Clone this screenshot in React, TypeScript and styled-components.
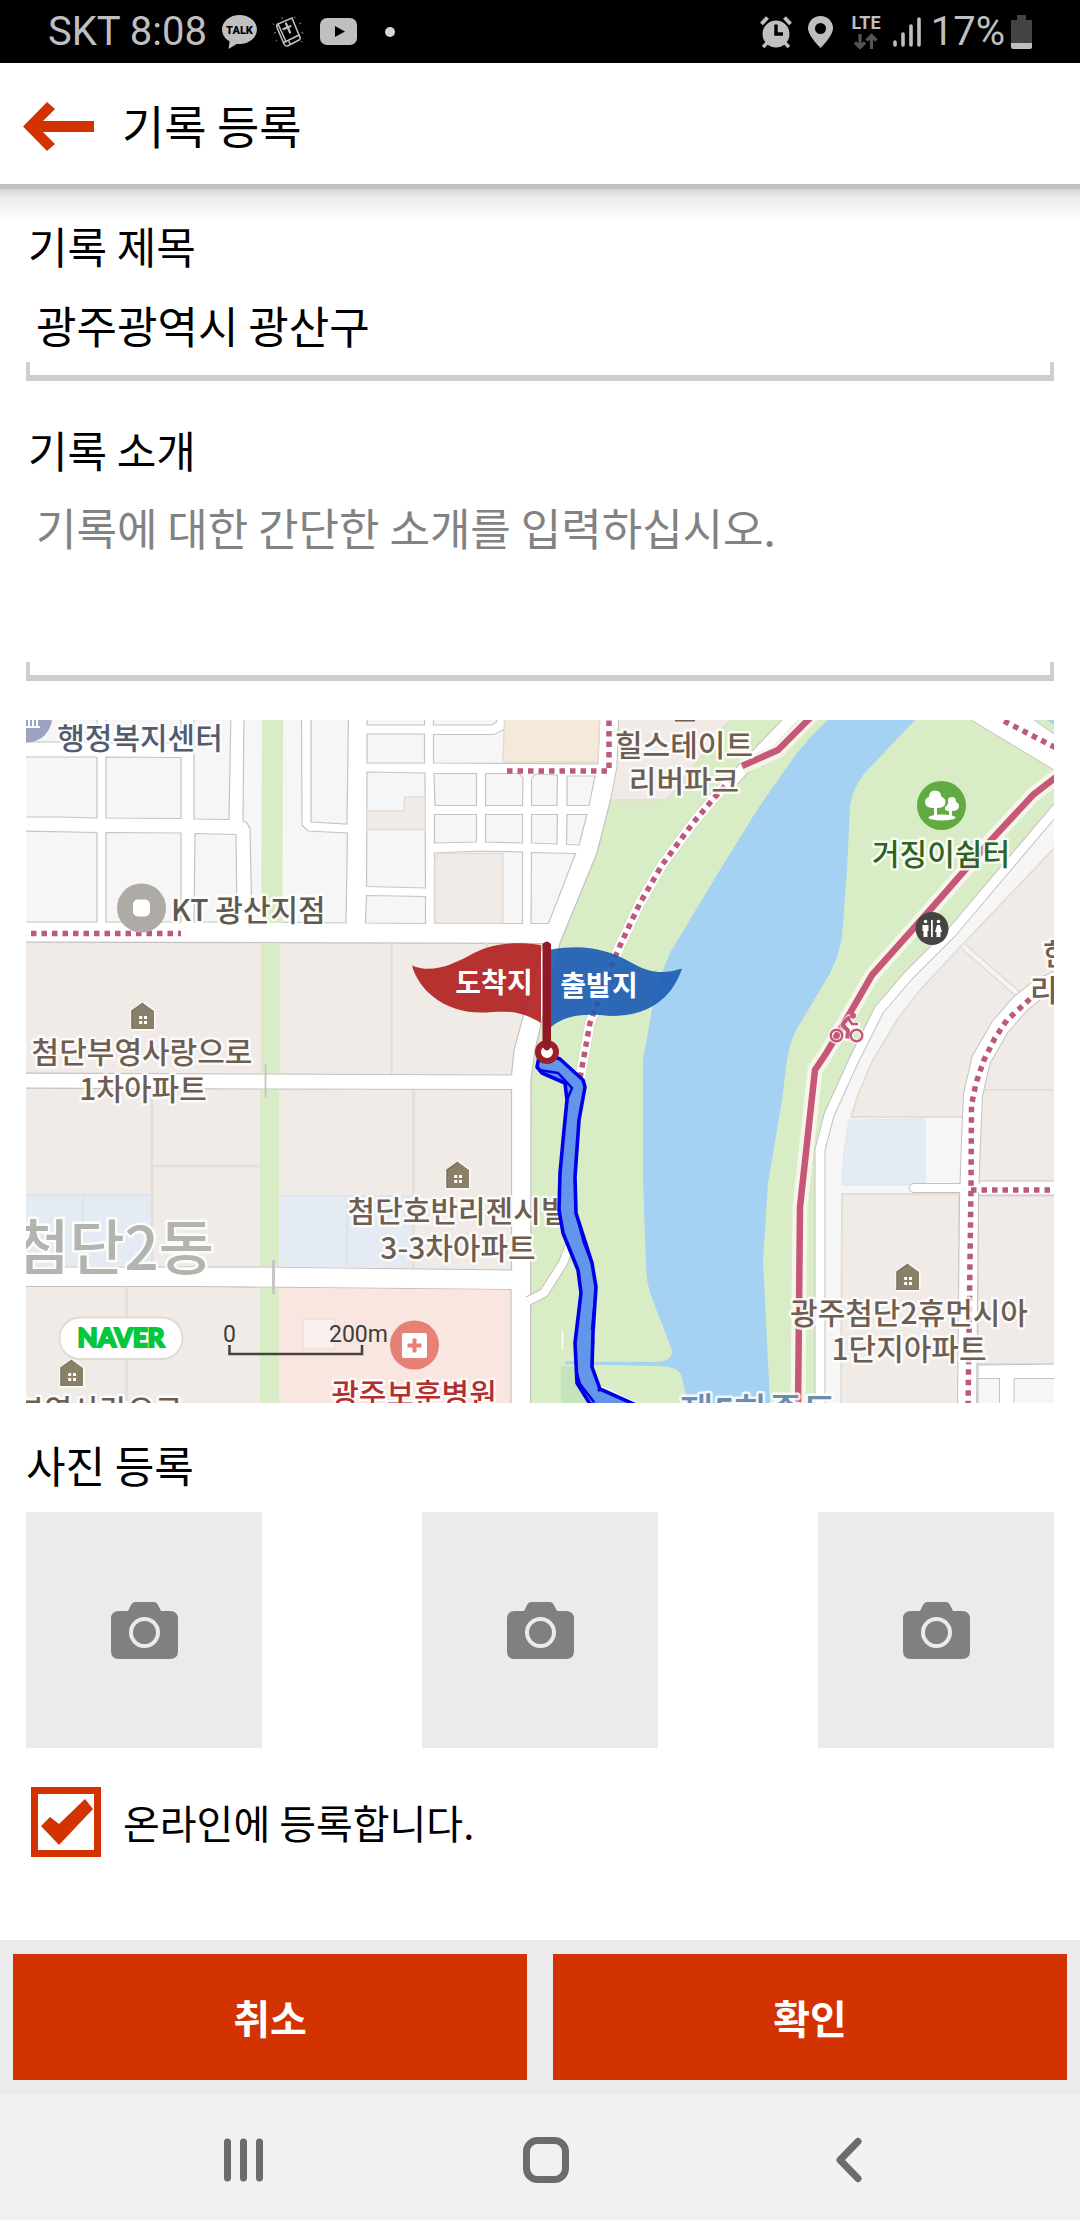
import React, { useState } from "react";
import styled, { createGlobalStyle } from "styled-components";

const GlobalStyle = createGlobalStyle`
  *, *::before, *::after { box-sizing: border-box; }
  body {
    margin: 0;
    background: #fff;
    color: #000;
    font-family: "Noto Sans CJK KR", "Noto Sans", sans-serif;
  }
  svg { display: block; flex: none; }
  button, input, textarea { font: inherit; color: inherit; }
`;

const brand = "#d23300";
const statusGray = "#bfbfbf";
const mapFont = '"Noto Sans CJK KR", "Noto Sans", sans-serif';

const Page = styled.div`
  display: flex;
  flex-direction: column;
  min-height: 100vh;
`;

const StatusBar = styled.div`
  display: flex;
  align-items: center;
  justify-content: space-between;
  height: 63px;
  padding: 0 48px;
  background: #000;
  color: ${statusGray};
  font-family: Roboto, sans-serif;
  font-size: 40px;
  line-height: 64px;
`;

const StatusGroup = styled.div<{ $gap: number }>`
  display: flex;
  align-items: center;
  gap: ${(p) => p.$gap}px;
`;

const Header = styled.header`
  display: flex;
  align-items: center;
  gap: 28px;
  height: 126px;
  padding: 0 23px;
  border-bottom: 5px solid #c1c1c1;
  background: #fff;
`;

const HeaderTitle = styled.h1`
  margin: 0;
  font-size: 46px;
  font-weight: 400;
  line-height: 64px;
`;

const IconButton = styled.button`
  display: flex;
  align-items: center;
  justify-content: center;
  padding: 0;
  border: 0;
  background: none;
  cursor: pointer;
`;

const Form = styled.main`
  flex: 1;
  display: flex;
  flex-direction: column;
  padding: 24px 26px 40px;
  background: linear-gradient(#d6d6d6, #ececec 9px, #fff 33px);
`;

const Field = styled.div`
  display: flex;
  flex-direction: column;
  & + & {
    margin-top: 36px;
  }
`;

const Caption = styled.label`
  padding: 0 2px;
  font-size: 43px;
  line-height: 64px;
`;

const SectionTitle = styled.h2`
  margin: 0 0 16px;
  font-size: 43px;
  font-weight: 400;
  line-height: 64px;
`;

const trayEdges = `
  linear-gradient(#cdcdcd, #cdcdcd) bottom / 100% 6px no-repeat,
  linear-gradient(#cfcfcf, #cfcfcf) left bottom / 4px 19px no-repeat,
  linear-gradient(#cfcfcf, #cfcfcf) right bottom / 4px 19px no-repeat
`;

const TextInput = styled.input`
  width: 100%;
  height: 104px;
  padding: 16px 10px 24px;
  border: 0;
  border-radius: 0;
  outline: 0;
  background: ${trayEdges};
  font-size: 44px;
  line-height: 64px;
`;

const TextArea = styled.textarea`
  display: block;
  width: 100%;
  height: 200px;
  padding: 14px 10px 24px;
  border: 0;
  border-radius: 0;
  outline: 0;
  resize: none;
  background: ${trayEdges};
  font-size: 44px;
  line-height: 64px;
  &::placeholder {
    color: #828282;
    opacity: 1;
  }
`;

const MapFrame = styled.div`
  margin: 39px 0 29px;
  overflow: hidden;
  svg {
    width: 100%;
    height: auto;
  }
`;

const Photos = styled.section`
  display: flex;
  flex-direction: column;
`;

const PhotoRow = styled.div`
  display: flex;
  justify-content: space-between;
`;

const PhotoSlot = styled(IconButton)`
  width: 236px;
  height: 236px;
  background: #ebebeb;
`;

const CheckLabel = styled.label`
  display: flex;
  align-items: center;
  gap: 22px;
  margin-top: 39px;
  padding: 0 5px;
  font-size: 40px;
  line-height: 64px;
`;

const CheckBox = styled.span`
  display: grid;
  width: 70px;
  height: 70px;
  > * {
    grid-area: 1 / 1;
  }
  svg {
    pointer-events: none;
  }
`;

const CheckInput = styled.input`
  appearance: none;
  width: 70px;
  height: 70px;
  margin: 0;
  border: 7px solid ${brand};
  background: #fff;
`;

const ActionBar = styled.footer`
  display: grid;
  grid-template-columns: 1fr 1fr;
  gap: 26px;
  padding: 14px 13px;
  background: #ebebeb;
`;

const ActionButton = styled.button`
  height: 126px;
  padding: 0;
  border: 0;
  background: ${brand};
  color: #fff;
  font-size: 40px;
  font-weight: 700;
  line-height: 64px;
`;

const NavBar = styled.nav`
  display: flex;
  justify-content: space-between;
  height: 126px;
  padding: 6px 217px 0 223px;
  background: #f1f1f1;
`;

const BackArrow = () => (
  <svg width="71" height="55" viewBox="0 -6 71 55" fill={brand}>
    <path d="M0 24.5 24 0l8 7-12 12h51v11H20l12 12-8 7z" />
  </svg>
);

const TalkIcon = () => (
  <svg width="35" height="34" viewBox="0 0 35 34">
    <ellipse cx="17.5" cy="14.5" rx="17.5" ry="14.5" fill={statusGray} />
    <path d="M8 24 6.500 34 18 27z" fill={statusGray} />
    <text x="17.5" y="19" textAnchor="middle" fontFamily="Roboto, sans-serif" fontSize="11" fontWeight="900" fill="#000">
      TALK
    </text>
  </svg>
);

const BibleIcon = () => (
  <svg width="33" height="32" viewBox="0 0 33 32" fill="none" stroke={statusGray} strokeWidth="1.6" strokeLinecap="round">
    <path d="M6 8 20 2l7 17-13 6.5z" />
    <path d="M6 8c-1.500 1-1.500 2-1 3.500L12 28c1 2 2 2.500 4 1.700l11.500-6c1-.7 1-2-.5-4.700M14 25.500c-2 .5-2.500 1.500-2 2.500M17 25.500l1.500 3 2-.9" />
    <path d="m14 7.500 4 9M11.500 13l7-2.800" strokeWidth="2.2" />
    <path d="M1 8l1 .4M2 17l1.500-.5M4 25l1-.8M23 1l-.4 1M29 7l-1.500.7M31 17l-1.500-.2M30 26l-1-.8M10 1.500l.4 1.200" strokeWidth="0.7" />
  </svg>
);

const VideoIcon = () => (
  <svg width="37" height="27" viewBox="0 0 37 27">
    <rect width="37" height="27" rx="7" fill={statusGray} />
    <path d="M15 8v11l10-5.500z" fill="#000" />
  </svg>
);

const DotIcon = () => (
  <svg width="24" height="10" viewBox="0 0 24 10">
    <circle cx="18" cy="5" r="5" fill="#d6d6d6" />
  </svg>
);

const AlarmIcon = () => (
  <svg width="32" height="32" viewBox="0 0 32 32">
    <circle cx="16" cy="18" r="13.5" fill={statusGray} />
    <path d="m1.500 8 6-6.500M30.500 8l-6-6.500" stroke={statusGray} strokeWidth="4" />
    <path d="M7 27l-4 4M25 27l4 4" stroke={statusGray} strokeWidth="3.5" />
    <path d="M16 8.500V18h7" stroke="#000" strokeWidth="3.5" fill="none" />
  </svg>
);

const PinIcon = () => (
  <svg width="25" height="32" viewBox="0 0 25 32">
    <path d="M12.500 0C5.500 0 0 5.500 0 12.300 0 20 12.500 32 12.500 32S25 20 25 12.300C25 5.500 19.500 0 12.500 0z" fill={statusGray} />
    <circle cx="12.5" cy="12.5" r="5.5" fill="#000" />
  </svg>
);

const LteIcon = () => (
  <svg width="34" height="36" viewBox="0 -2 34 36">
    <text x="17" y="13" textAnchor="middle" fontFamily="Roboto, sans-serif" fontSize="18" fontWeight="700" fill={statusGray}>
      LTE
    </text>
    <path d="M11 18v13M6 26.500l5 5 5-5M22.500 33V20M17.500 24.500l5-5 5 5" stroke="#555" strokeWidth="3.2" fill="none" />
  </svg>
);

const SignalIcon = () => (
  <svg width="28" height="32" viewBox="0 0 28 32" stroke={statusGray} strokeWidth="3.6" strokeLinecap="round">
    <path d="M2 26v3M10 18v11M18 10v19M26 3v26" />
  </svg>
);

const BatteryIcon = () => (
  <svg width="21" height="34" viewBox="0 0 21 34">
    <path d="M6 0h9v5h6v23H0V5h6z" fill="#444" />
    <path d="M0 28h21v4q0 2-2 2H2q-2 0-2-2z" fill={statusGray} />
  </svg>
);

const CameraIcon = () => (
  <svg width="67" height="57" viewBox="0 0 67 57">
    <path
      d="M8 9h9l3-6q1.500-3 4-3h19q2.500 0 4 3l3 6h9q8 0 8 8v32q0 8-8 8H8q-8 0-8-8V17q0-8 8-8z"
      fill="#808080"
    />
    <circle cx="33.5" cy="30.5" r="13.5" fill="none" stroke="#ebebeb" strokeWidth="4" />
  </svg>
);

const CheckMark = () => (
  <svg width="70" height="70" viewBox="0 0 70 70">
    <path d="m10 39 9-9 9 7 26-25 8 10-34 36z" fill={brand} />
  </svg>
);

const RecentsIcon = () => (
  <svg width="42" height="44" viewBox="0 0 42 44" stroke="#6c6c6c" strokeWidth="7" strokeLinecap="round">
    <path d="M4.500 4v36M20.500 4v36M36.500 4v36" />
  </svg>
);

const HomeIcon = () => (
  <svg width="46" height="46" viewBox="0 0 46 46">
    <rect x="3.5" y="3.5" width="39" height="39" rx="11" fill="none" stroke="#6c6c6c" strokeWidth="7" />
  </svg>
);

const BackIcon = () => (
  <svg width="37" height="46" viewBox="-9 0 37 46">
    <path d="M23 4.500 5 23l18 18.500" fill="none" stroke="#6c6c6c" strokeWidth="7" strokeLinecap="round" strokeLinejoin="round" />
  </svg>
);

/* ---- Course map ---- */

type Point = [number, number];
const pts = (list: Point[]) => list.map((p) => p.join(",")).join(" ");
const line = (list: Point[]) => "M" + list.map((p) => p.join(" ")).join("L");

const cityBlocks: Point[][] = [
  [[16, 710], [97, 710], [97, 742], [16, 742]],
  [[106, 710], [181, 710], [181, 743], [106, 743]],
  [[16, 757], [97, 757], [97, 818], [60, 817], [16, 817]],
  [[106, 757], [181, 757.5], [181, 818.5], [106, 818]],
  [[194, 710], [231, 710], [229, 819.5], [194, 819]],
  [[16, 831], [97, 832.5], [97, 922], [16, 922]],
  [[106, 832.5], [181, 833], [181, 922], [106, 922]],
  [[195, 833.5], [236, 834.5], [237, 922], [194, 922]],
  [[244, 710], [243, 821], [247, 823], [250, 829], [252, 922], [346, 923], [347.5, 833], [308, 831], [302, 825], [301.5, 710]],
  [[311, 710], [348.5, 710], [347, 824], [311, 822]],
  [[367, 710], [424.5, 710], [424.5, 725], [367, 725]],
  [[367, 734], [424.5, 734], [424.5, 763], [367, 763]],
  [[367, 772], [425, 773], [425.5, 888], [366.5, 886.5]],
  [[366.5, 895.5], [425.5, 896.5], [425.5, 923.5], [365.5, 923]],
  [[433.5, 710], [496.5, 710], [496.5, 722], [492, 725], [433.5, 725]],
  [[433.5, 734.5], [494, 734.5], [505, 729], [505, 710], [600, 710], [598, 764], [433.5, 763]],
  [[434, 773.5], [476.5, 773.5], [476.5, 805.5], [435, 805.5]],
  [[485.5, 773.5], [519, 773.5], [523, 778], [522.5, 805.5], [485.5, 805.5]],
  [[531.5, 779], [535, 774], [557.5, 775], [557, 805.5], [531.5, 805.5]],
  [[567, 776], [595, 776], [589, 805.5], [567, 805.5]],
  [[434.5, 814.5], [476.5, 814.5], [476.5, 842], [434.5, 843]],
  [[485.5, 814.5], [522.5, 814.5], [522.5, 843], [485.5, 842]],
  [[531.5, 814.5], [557.5, 814.5], [557, 844], [531.5, 843]],
  [[567, 814.5], [587, 814.5], [579, 845], [566.5, 844.5]],
  [[434.5, 853], [480, 851], [522.5, 852], [522.5, 923.5], [434.5, 923.5]],
  [[531.5, 852.5], [575.5, 853.5], [548.5, 923.5], [531, 923.5]],
];

const estates: Point[][] = [
  [[16, 942], [543, 943.5], [514, 1050], [511.5, 1075], [260, 1074], [16, 1073]],
  [[16, 1088], [260, 1089], [511.5, 1089.5], [511.5, 1270], [260, 1267], [16, 1267]],
  [[16, 1286.5], [200, 1286.5], [511, 1289.5], [511, 1410], [16, 1410]],
];

const bikePath: Point[] = [
  [1060, 774], [1033, 795], [993, 838], [930, 910], [872, 975], [846, 1020], [827, 1052], [815, 1070], [800, 1207], [798, 1410],
];
const riverRoad: Point[] = [
  [1062, 802], [952, 932], [908, 976], [879, 1010], [853, 1062], [829, 1115], [820, 1150], [820, 1410],
];
const estateRoad: Point[] = [
  [1070, 975], [1040, 988], [1020, 1004], [1000, 1027], [981, 1060], [973, 1095], [971, 1140], [969, 1200], [967, 1410],
];
const estateDots: Point[] = [
  [1030, 999], [1007, 1020], [995, 1038], [984, 1060], [976, 1083], [971.5, 1105], [971, 1187], [968, 1410],
];
const promenade: Point[] = [
  [732, 778], [715, 797], [693, 823], [662, 865], [640, 903], [618, 950], [602, 990], [590, 1023], [580, 1078],
];
const route: Point[] = [
  [540, 1052], [560, 1059], [583, 1080], [585, 1087], [579, 1120], [575, 1177], [576, 1213], [592, 1263], [596, 1287], [593, 1333], [592, 1367], [600, 1389], [645, 1409],
  [590, 1404], [577, 1383], [575, 1343], [581, 1293], [578, 1270], [563, 1233], [559, 1210], [560, 1173], [564, 1130], [567, 1100], [565, 1083], [542, 1073], [537, 1067],
];

const MapText = styled.text<{ $size?: number }>`
  font-family: ${mapFont};
  font-size: ${(p) => p.$size || 30}px;
  font-weight: 500;
  paint-order: stroke;
  stroke: rgba(255, 255, 255, 0.85);
  stroke-width: 5px;
  stroke-linejoin: round;
`;

const FlagText = styled.text`
  font-family: ${mapFont};
  font-size: 28px;
  font-weight: 700;
  fill: #fff;
  text-anchor: middle;
`;

const ScaleText = styled.text`
  font-family: Roboto, sans-serif;
  font-size: 23px;
  fill: #3c3c3c;
`;

const LogoText = styled.text`
  font-family: Lato, sans-serif;
  font-size: 26px;
  font-weight: 900;
  fill: #03c73c;
  stroke: #03c73c;
  stroke-width: 2px;
  text-anchor: middle;
`;

const House = ({ x, y }: { x: number; y: number }) => (
  <g transform={`translate(${x} ${y})`}>
    <path d="M0 0 11 8v18h-22V8z" fill="#8a8068" stroke="#fff" strokeOpacity="0.8" strokeWidth="3" paintOrder="stroke" />
    <path d="M0 0-11 8v18" fill="none" stroke="#7a705c" strokeWidth="1.5" />
    <path d="M-3.800 13h3v3h-3zM1 13h3v3H1zM-3.800 18h3v3h-3zM1 18h3v3H1z" fill="#fff" />
  </g>
);

const Road = ({ points, width, cap }: { points: Point[]; width: number; cap?: "round" }) => (
  <g fill="none" strokeLinejoin="round" strokeLinecap={cap}>
    <path d={line(points)} stroke="#c4c2c0" strokeWidth={width + 2} />
    <path d={line(points)} stroke="#fff" strokeWidth={width} />
  </g>
);

const Dots = ({ points }: { points: Point[] }) => (
  <path d={line(points)} fill="none" stroke="#bd597a" strokeWidth="5.5" strokeDasharray="5.5 5" />
);

const brown = "#6f5d50";

const CourseMap = () => (
  <svg viewBox="26 720 1028 683" role="img" aria-label="기록 경로 지도">
    <rect x="26" y="720" width="1028" height="683" fill="#fff" />

    <g fill="#f6f6f6" stroke="#c4c4c4" strokeWidth="1.2">
      {cityBlocks.map((b, i) => (
        <polygon key={i} points={pts(b)} />
      ))}
    </g>
    <g fill="#f0ebe7" stroke="#e3ddd8" strokeWidth="1.5">
      <polygon points="367,811 404.5,811 404.5,797 425,797 425,829.5 367,829.5" />
      <polygon points="435,858 439,853.5 503,853.5 503,923 435,923" />
    </g>
    <polygon points="504,732 505,710 600,710 598,762 503,762" fill="#f5e9dc" stroke="#e5dacf" strokeWidth="1.5" />

    <g fill="#f0ebe7" stroke="#c4c2c0" strokeWidth="1.2">
      {estates.map((b, i) => (
        <polygon key={i} points={pts(b)} />
      ))}
    </g>
    <g fill="#e4ebf3">
      <rect x="26" y="1195" width="125" height="71" />
      <polygon points="280,1196 414,1196 414,1268 280,1267" />
    </g>
    <polygon points="280,1288 510,1290 510,1403 280,1403" fill="#fae6e1" />
    <rect x="303" y="1319" width="32" height="30" fill="#faf1ee" stroke="#eedfdb" strokeWidth="1.5" />
    <g stroke="#e3deda" strokeWidth="2.5" fill="none">
      <path d="M391.500 943V1074M487 943V960M152 1089V1266M153 1166H259M413.500 1090V1268M126.500 1287V1403" />
      <path d="M26 1195H151M83 1196V1266M281 1196H413M347 1197V1268" stroke="#dde4ec" />
    </g>
    <g fill="#d8ecc5">
      <polygon points="262,720 283,720 282.5,923 261,923" />
      <rect x="261" y="943" width="19" height="130" />
      <rect x="260" y="1090" width="19" height="176" />
      <rect x="260" y="1288" width="19" height="115" />
    </g>
    <path d="M265.500 1064V1097" stroke="#c8c6c4" strokeWidth="1.8" />
    <path d="M273.500 1260V1294" stroke="#c8c6c4" strokeWidth="3" />

    <polygon
      points="619,710 617,767 611,798 597,853 560,943 535,1050 531,1080 530.5,1410 1070,1410 1070,710"
      fill="#d8ecc5"
      stroke="#c4c2c0"
      strokeWidth="1.2"
    />
    <polygon points="619.5,710 735,710 728,722 667,799 611,800 617.5,767" fill="#f0ebe7" />
    <path d="M612 800H667L728 722" fill="none" stroke="#e3ddd0" strokeWidth="1.5" />
    <polygon points="561,1366 690,1372 690,1410 561,1410" fill="#c6e4bb" />
    <path d="M592 1366L672 1364Q692 1376 686 1405H606z" fill="#d8ecc5" />

    <path
      d="M828 720Q806 740 792 760L757 810L720 870L670 953Q658 980 652 1010L643 1060V1180L646 1263Q646 1280 650 1293L672 1350Q673 1362 655 1362L565 1361.500V1364L658 1366Q680 1366 682 1378L688 1403H770L763 1260L768 1183L782 1100L787 1060Q790 1040 798 1027L830 973Q839 955 842 937L847 870L850 807Q852 790 863 775L915 720z"
      fill="#a5d1f2"
    />

    <Road points={[[733, 780], [746, 766], [802, 708]]} width={11} />
    <path d={line([[742, 767], [778, 751], [816, 712]])} fill="none" stroke="#f6f3e6" strokeWidth="14" />
    <path d={line([[742, 766], [778, 750], [816, 712]])} fill="none" stroke="#c65776" strokeWidth="6.5" />

    <path d={line(promenade)} fill="none" stroke="#cfe0c2" strokeWidth="11" />
    <path d={line(promenade)} fill="none" stroke="#fff" strokeWidth="9.5" />
    <Dots points={promenade} />
    <Road points={[[528, 1301], [544, 1293], [563, 1263], [572, 1240]]} width={8} />
    <path d="M562.500 1331V1350" stroke="#fff" strokeWidth="1.5" />

    <polygon points={pts([...riverRoad, [1070, 1410]])} fill="#f6f6f6" />
    <g fill="#f0ebe7" stroke="#e2ddd7" strokeWidth="1.8">
      <polygon points="1062,840 962,945 920,990 897,1020 872,1062 858,1095 851,1117 960,1117 1062,1117" />
      <polygon points="842,1194 959,1194 959,1410 841,1410" />
      <rect x="978" y="1090" width="90" height="92" />
      <rect x="978" y="1196" width="90" height="168" />
    </g>
    <rect x="975" y="1100" width="85" height="40" fill="#f0ebe7" />
    <polygon points="849,1120 925,1119 925,1185 842,1185 844,1152" fill="#e4ebf3" stroke="#dde6ee" />
    <path d="M963 946 1019 995" stroke="#e2ddd7" strokeWidth="7" />
    <path d="M963 946 1019 995" stroke="#f6f5f3" strokeWidth="4" />
    <polygon points="978,1365 1060,1364 1060,1410 978,1410" fill="#fff" stroke="#c4c2c0" />
    <g fill="#f6f6f6" stroke="#c4c4c4">
      <rect x="978" y="1378.5" width="21.5" height="30" />
      <rect x="1014" y="1378.5" width="50" height="30" />
    </g>
    <Road points={[[914, 1188], [965, 1188]]} width={8} cap="round" />
    <Road points={[[975, 1188], [1060, 1188]]} width={13} />
    <Road points={estateRoad} width={18} />
    <path d="M955 1188H1060" stroke="#fff" strokeWidth="8" />
    <Dots points={estateDots} />
    <Dots points={[[971, 1190], [1054, 1190]]} />
    <Road points={riverRoad} width={9} />

    <polygon points="958,712 1064,776 1064,741 1020,710" fill="#fff" stroke="#c4c2c0" />
    <Dots points={[[1004, 721], [1060, 750]]} />
    <path d="M1047 720h8v5z" fill="#a5d1f2" />
    <path d={line(bikePath)} fill="none" stroke="#f6f5e9" strokeWidth="15" />
    <path d={line(bikePath)} fill="none" stroke="#c65776" strokeWidth="6.5" />

    <Dots points={[[31, 933.5], [181, 933.5]]} />
    <Dots points={[[507, 771], [609, 771], [609, 720]]} />

    {/* 지명 */}
    <circle cx="27" cy="717.5" r="25" fill="#9aa3c0" />
    <path d="M26 727h14M29 718v8M33 718v8M37 718v8" stroke="#fff" strokeWidth="2" />
    <MapText x="140" y="749" textAnchor="middle" fill="#525c70">행정복지센터</MapText>

    <circle cx="141.5" cy="908" r="24.5" fill="#aeaaa5" />
    <rect x="133" y="899.5" width="17" height="17" rx="5" fill="#fff" />
    <MapText x="171" y="921" fill="#5f5a50">KT 광산지점</MapText>

    <House x={143} y={1003} />
    <MapText x="142" y="1063" textAnchor="middle" fill={brown}>첨단부영사랑으로</MapText>
    <MapText x="143" y="1100" textAnchor="middle" fill={brown}>1차아파트</MapText>

    <path d="M675 720.500h20" stroke={brown} strokeWidth="2" />
    <MapText x="684" y="756" textAnchor="middle" fill={brown}>힐스테이트</MapText>
    <MapText x="684" y="792" textAnchor="middle" fill={brown}>리버파크</MapText>

    <House x={458} y={1162} />
    <MapText x="458" y="1222" textAnchor="middle" fill={brown}>첨단호반리젠시빌</MapText>
    <MapText x="458" y="1259" textAnchor="middle" fill={brown}>3-3차아파트</MapText>

    <MapText x="214" y="1270" textAnchor="end" fill="#b4b4af" $size={60}>첨단2동</MapText>

    <House x={72} y={1360} />
    <MapText x="72" y="1421" textAnchor="middle" fill={brown}>첨단부영사랑으로</MapText>

    <House x={908} y={1264} />
    <MapText x="909" y="1324" textAnchor="middle" fill={brown}>광주첨단2휴먼시아</MapText>
    <MapText x="909" y="1360" textAnchor="middle" fill={brown}>1단지아파트</MapText>

    <MapText x="758" y="1425" textAnchor="middle" fill="#6c8cab" $size={37}>제5하중도</MapText>
    <MapText x="1043" y="965" fill={brown}>한</MapText>
    <MapText x="1030" y="1001" fill={brown}>리버</MapText>

    <circle cx="941.5" cy="805.5" r="24.5" fill="#62aa42" />
    <g fill="#fff">
      <ellipse cx="942" cy="817.5" rx="13.5" ry="3" />
      <path d="M934 817v-9q-9 0-9-6 0-4 4-5 0-6.500 6-6.500t6.500 6.500q4 1 4 5 0 6-8.500 6v9z" />
      <path d="M949 817v-6q-5 0-4-4 4-2 3-8 1-2 4-2 4 0 4 5 3 1 3 4 0 5-7 5v6z" />
    </g>
    <MapText x="941" y="865" textAnchor="middle" fill="#2f6420">거징이쉼터</MapText>

    <circle cx="932" cy="928.5" r="16.5" fill="#444" />
    <g fill="#fff">
      <circle cx="925.5" cy="921.5" r="1.8" />
      <path d="M922.500 925h6v6h-1v6h-4v-6h-1z" />
      <rect x="931" y="920" width="1.8" height="17" />
      <circle cx="938.5" cy="921.5" r="1.8" />
      <path d="M937 925h3l2 7h-1.500v5h-4v-5H935z" />
    </g>

    <g fill="none" stroke="#fff" strokeOpacity="0.8" strokeLinejoin="round" strokeLinecap="round">
      <circle cx="836.5" cy="1035.5" r="6" strokeWidth="5" />
      <circle cx="856.5" cy="1035.5" r="6" strokeWidth="5" />
      <path d="M849 1018l-6 7 5 5-1 8M848 1021l4 4h5" strokeWidth="7" />
    </g>
    <g fill="none" stroke="#c65776" strokeLinejoin="round">
      <circle cx="836.5" cy="1035.5" r="5.8" strokeWidth="2.4" />
      <circle cx="856.5" cy="1035.5" r="5.8" strokeWidth="2.4" />
      <path d="M850 1017.500q-4 1-7.500 7.500l5.500 5.500-.8 8" strokeWidth="4" />
      <path d="M844 1023l4-5 4 6h6" strokeWidth="2.6" />
      <circle cx="853" cy="1015.7" r="2.6" fill="#c65776" />
    </g>

    <circle cx="414.5" cy="1345" r="24.5" fill="#e88175" />
    <rect x="402" y="1333" width="25" height="25" rx="2" fill="#fff" />
    <path d="M414.500 1338.500v14M407.500 1345.500h14" stroke="#e88175" strokeWidth="4" />
    <MapText x="414" y="1405" textAnchor="middle" fill="#b1302f">광주보훈병원</MapText>

    {/* 이동 경로 */}
    <path d="M598 1387 640 1407" stroke="#fff" strokeWidth="5" />
    <polygon points={pts(route)} fill="#6495ed" stroke="#0000e6" strokeWidth="3.6" strokeLinejoin="round" />
    <path
      d="M539 1070 558 1073 572 1088 567 1100M576 1213 584 1243 592 1263M596 1287 592 1330M593 1340 592 1367M576 1370 580 1384 594 1402M600 1389 598 1391"
      fill="none"
      stroke="#0000e6"
      strokeWidth="2.5"
    />
    <circle cx="547" cy="1052" r="9" fill="#fff" stroke="#9f1d2a" strokeWidth="6" />
    <path
      d="M412 965.500C432 974 452 965 474 953 496 942 518 942 541 945V1023C516 1008 502 1012 482 1012.500 442 1013 418 988 412 965.500z"
      fill="#ad1616"
      fillOpacity="0.87"
    />
    <path
      d="M551 949.500C582 944 606 948 632 963 652 974 664 974 682 968.500 674 992 656 1016 610 1016 588 1014 568 1013 551 1027z"
      fill="#1a5ab2"
      fillOpacity="0.9"
    />
    <path d="M542.500 944q4.500-5 8.500 0V1047q-4 7-8.500 0z" fill="#901927" />
    <FlagText x="494" y="993">도착지</FlagText>
    <FlagText x="599" y="996">출발지</FlagText>

    {/* 축척 */}
    <rect x="59.5" y="1317.5" width="123" height="41.5" rx="20.5" fill="#fff" stroke="#dedad6" strokeWidth="1.8" />
    <LogoText x="121" y="1347">NAVER</LogoText>
    <ScaleText x="223" y="1342">0</ScaleText>
    <ScaleText x="329" y="1342">200m</ScaleText>
    <path d="M229.500 1345v9h132.500v-9" fill="none" stroke="#444" strokeWidth="2.6" />
  </svg>
);

const photoSlots = ["사진 1 추가", "사진 2 추가", "사진 3 추가"];

export default function App() {
  const [title, setTitle] = useState("광주광역시 광산구");
  const [intro, setIntro] = useState("");
  const [online, setOnline] = useState(true);

  return (
    <Page>
      <GlobalStyle />
      <StatusBar>
        <StatusGroup $gap={15}>
          <span>SKT 8:08</span>
          <TalkIcon />
          <BibleIcon />
          <VideoIcon />
          <DotIcon />
        </StatusGroup>
        <StatusGroup $gap={16}>
          <AlarmIcon />
          <PinIcon />
          <StatusGroup $gap={10}>
            <LteIcon />
            <SignalIcon />
            <StatusGroup $gap={6}>
              <span>17%</span>
              <BatteryIcon />
            </StatusGroup>
          </StatusGroup>
        </StatusGroup>
      </StatusBar>

      <Header>
        <IconButton type="button" aria-label="뒤로">
          <BackArrow />
        </IconButton>
        <HeaderTitle>기록 등록</HeaderTitle>
      </Header>

      <Form>
        <Field>
          <Caption htmlFor="record-title">기록 제목</Caption>
          <TextInput id="record-title" type="text" value={title} onChange={(e) => setTitle(e.target.value)} />
        </Field>
        <Field>
          <Caption htmlFor="record-intro">기록 소개</Caption>
          <TextArea
            id="record-intro"
            placeholder="기록에 대한 간단한 소개를 입력하십시오."
            value={intro}
            onChange={(e) => setIntro(e.target.value)}
          />
        </Field>
        <MapFrame>
          <CourseMap />
        </MapFrame>
        <Photos>
          <SectionTitle>사진 등록</SectionTitle>
          <PhotoRow>
            {photoSlots.map((name) => (
              <PhotoSlot key={name} type="button" aria-label={name}>
                <CameraIcon />
              </PhotoSlot>
            ))}
          </PhotoRow>
        </Photos>
        <CheckLabel htmlFor="record-online">
          <CheckBox>
            <CheckInput id="record-online" type="checkbox" checked={online} onChange={(e) => setOnline(e.target.checked)} />
            {online && <CheckMark />}
          </CheckBox>
          온라인에 등록합니다.
        </CheckLabel>
      </Form>

      <ActionBar>
        <ActionButton type="button">취소</ActionButton>
        <ActionButton type="button">확인</ActionButton>
      </ActionBar>
      <NavBar>
        <IconButton type="button" aria-label="최근 앱">
          <RecentsIcon />
        </IconButton>
        <IconButton type="button" aria-label="홈">
          <HomeIcon />
        </IconButton>
        <IconButton type="button" aria-label="이전">
          <BackIcon />
        </IconButton>
      </NavBar>
    </Page>
  );
}
